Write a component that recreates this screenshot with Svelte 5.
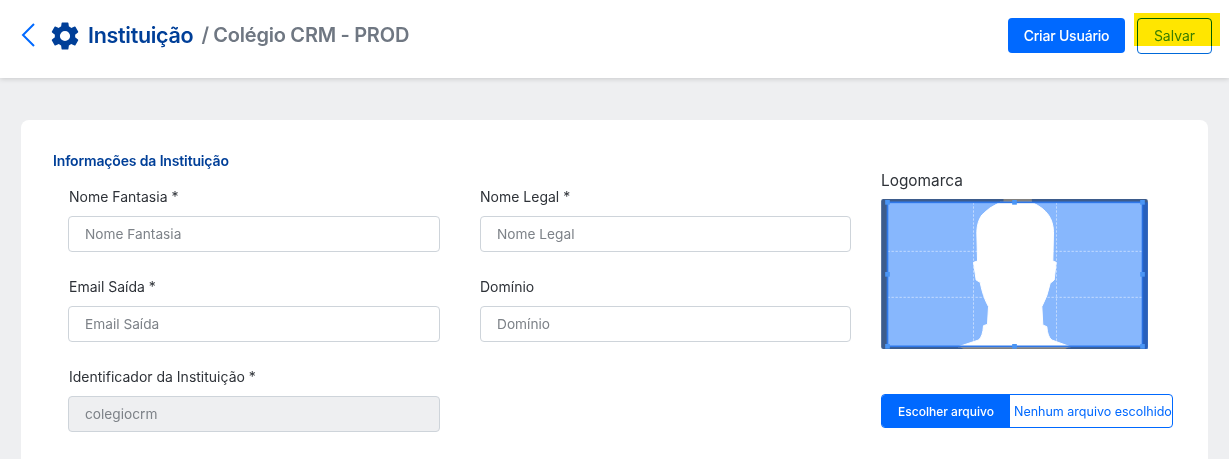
<script>
  const fields = [
    { label: 'Nome Fantasia *', placeholder: 'Nome Fantasia' },
    { label: 'Nome Legal *', placeholder: 'Nome Legal' },
    { label: 'Email Saída *', placeholder: 'Email Saída' },
    { label: 'Domínio', placeholder: 'Domínio' },
    { label: 'Identificador da Instituição *', value: 'colegiocrm', disabled: true }
  ]

  const head = 'M390 112 L485 112 Q520 128 535 150 Q549 170 550 200 L548 288 L558 292 L552 345 L540 355 Q532 395 515 425 L518 480 L530 485 Q532 515 545 525 L600 545 L265 545 L325 525 Q338 515 340 482 L352 478 L355 425 Q338 395 330 352 L318 345 L310 292 L322 288 L320 200 Q321 170 335 150 Q355 128 390 112 Z'
  const handles = [[52, 112], [433, 112], [817, 112], [52, 328], [817, 328], [52, 544], [433, 544], [817, 544]]
</script>

<div class="page">
  <header class="topbar">
    <div class="title">
      <svg class="back" viewBox="0 0 16 26" aria-hidden="true">
        <path d="M14 2 L3 13 L14 24" fill="none" stroke="#0069ff" stroke-width="2" />
      </svg>
      <svg class="gear" viewBox="0 0 24 24" aria-hidden="true">
        <path fill="#003f98" d="M19.14 12.94c.04-.3.06-.61.06-.94s-.02-.64-.07-.94l2.03-1.58a.49.49 0 0 0 .12-.61l-1.92-3.32a.49.49 0 0 0-.59-.22l-2.39.96a7 7 0 0 0-1.62-.94l-.36-2.54a.48.48 0 0 0-.48-.41h-3.84a.48.48 0 0 0-.47.41l-.36 2.54a7.2 7.2 0 0 0-1.62.94l-2.39-.96a.48.48 0 0 0-.59.22L2.74 8.87a.48.48 0 0 0 .12.61l2.03 1.58c-.05.3-.09.63-.09.94s.02.64.07.94l-2.03 1.58a.49.49 0 0 0-.12.61l1.92 3.32c.12.22.37.29.59.22l2.39-.96c.5.38 1.03.7 1.62.94l.36 2.54c.05.24.24.41.48.41h3.84c.24 0 .44-.17.47-.41l.36-2.54a7 7 0 0 0 1.62-.94l2.39.96c.22.08.47 0 .59-.22l1.92-3.32a.48.48 0 0 0-.12-.61l-2.01-1.58zM12 15.6A3.6 3.6 0 1 1 12 8.4a3.6 3.6 0 0 1 0 7.2z" />
      </svg>
      <h1>Instituição</h1>
      <span class="crumb">/ Colégio CRM - PROD</span>
    </div>
    <div class="actions">
      <button class="btn primary">Criar Usuário</button>
      <div class="save-wrap">
        <button class="btn outline">Salvar</button>
        <span class="marker"></span>
      </div>
    </div>
  </header>

  <main class="card">
    <div class="form">
      <h2>Informações da Instituição</h2>
      <div class="fields">
        {#each fields as f}
          <div class="field">
            <label for={f.label}>{f.label}</label>
            <input id={f.label} placeholder={f.placeholder} value={f.value ?? ''} disabled={f.disabled} />
          </div>
        {/each}
      </div>
    </div>

    <aside class="logo">
      <div class="logo-label">Logomarca</div>
      <svg class="cropper" viewBox="33 102 800 450" aria-hidden="true">
        <rect x="33" y="102" width="800" height="450" rx="6" fill="#3d5c8c" />
        <path d="M400 102 L485 102 L485 114 L400 114 Z M265 544 L600 544 L585 552 L280 552 Z" fill="#808080" />
        <rect x="52" y="112" width="765" height="432" fill="#87b7fd" />
        <path d={head} fill="#fff" stroke="#fff" stroke-width="3" stroke-linejoin="round" />
        <g stroke="#fff" stroke-width="2" stroke-dasharray="7 5" opacity="0.75">
          <path d="M310 112 V530 M559 112 V530 M52 259 H817 M52 397 H817" />
        </g>
        <rect x="52" y="112" width="765" height="432" fill="none" stroke="#2f78ea" stroke-width="5" />
        <rect x="817" y="112" width="16" height="440" fill="#1f63d0" opacity="0.7" />
        {#each handles as [x, y]}
          <rect x={x - 7} y={y - 7} width="14" height="14" fill="#4a95f5" />
        {/each}
      </svg>
      <div class="file">
        <span class="file-btn">Escolher arquivo</span>
        <span class="file-name">Nenhum arquivo escolhido</span>
      </div>
    </aside>
  </main>
</div>

<style>
  :global(body) {
    margin: 0;
    background: #eeeff1;
    font-family: Inter, "Noto Sans", sans-serif;
    overflow: hidden;
  }

  .page {
    height: 459px;
    overflow: hidden;
  }

  .topbar {
    height: 78px;
    box-sizing: border-box;
    background: #fff;
    box-shadow: 0 1px 5px rgba(0, 0, 0, 0.16);
    display: flex;
    align-items: center;
    justify-content: space-between;
    padding: 0 17px 8px 20px;
  }

  .title {
    display: flex;
    align-items: center;
  }

  .back {
    width: 16px;
    height: 26px;
    margin-right: 12px;
  }

  .gear {
    width: 34px;
    height: 34px;
    margin: 2px 6px 0 0;
  }

  h1 {
    margin: 0 8px 0 0;
    font-size: 21.5px;
    font-weight: 600;
    color: #003f98;
    letter-spacing: -0.3px;
  }

  .crumb {
    font-size: 20px;
    font-weight: 600;
    color: #6f7782;
    letter-spacing: -0.2px;
    word-spacing: -0.3px;
  }

  .actions {
    display: flex;
    align-items: center;
    gap: 12px;
  }

  .btn {
    font: 500 14px Inter, sans-serif;
    border-radius: 4px;
    height: 35px;
    box-sizing: border-box;
  }

  .primary {
    width: 117px;
    background: #0069ff;
    border: none;
    color: #fff;
    letter-spacing: -0.2px;
  }

  .save-wrap {
    position: relative;
    display: flex;
    margin-top: 1px;
  }

  .outline {
    width: 75px;
    height: 36px;
    background: #fff;
    border: 1px solid #0069d9;
    color: #3a8cff;
    font-weight: 400;
  }

  .marker {
    position: absolute;
    left: -3px;
    top: -5px;
    width: 86px;
    height: 33px;
    background: #ffe600;
    mix-blend-mode: multiply;
  }

  .card {
    margin: 42px 21px 0;
    background: #fff;
    border-radius: 8px;
    height: 400px;
    box-sizing: border-box;
    padding: 32px 0 0 32px;
    display: flex;
  }

  .form {
    width: 828px;
  }

  h2 {
    margin: 0;
    font-size: 14px;
    line-height: 18px;
    font-weight: 600;
    color: #003f98;
    letter-spacing: -0.15px;
  }

  .fields {
    display: grid;
    grid-template-columns: 372px 371px;
    column-gap: 40px;
    row-gap: 26px;
    margin: 18px 0 0 15px;
  }

  .field {
    display: flex;
    flex-direction: column;
    gap: 10px;
  }

  .field:nth-child(odd) label {
    padding-left: 1px;
  }

  label {
    font-size: 14px;
    line-height: 18px;
    color: #2e3238;
  }

  input {
    height: 36px;
    box-sizing: border-box;
    border: 1px solid #ced4da;
    border-radius: 4px;
    padding: 0 16px;
    font: 400 13.7px Inter, sans-serif;
    color: #7d8288;
    background: #fff;
    outline: none;
  }

  input::placeholder {
    color: #7d8288;
    opacity: 1;
  }

  input:disabled {
    background: #eeeff1;
  }

  .logo {
    display: flex;
    flex-direction: column;
    margin-top: 19px;
  }

  .logo-label {
    font-size: 15.4px;
    line-height: 20px;
    color: #2e3238;
    margin-bottom: 8px;
  }

  .cropper {
    display: block;
    width: 267px;
    height: 150px;
  }

  .file {
    margin-top: 45px;
    width: 292px;
    height: 34px;
    box-sizing: border-box;
    border: 1px solid #0069ff;
    border-radius: 4px;
    display: flex;
    align-items: center;
    overflow: hidden;
    font-size: 12px;
  }

  .file-btn {
    background: #0069ff;
    color: #fff;
    width: 128px;
    height: 100%;
    display: flex;
    align-items: center;
    justify-content: center;
    font-weight: 500;
  }

  .file-name {
    color: #0069ff;
    padding-left: 4px;
    white-space: nowrap;
    font-size: 12.5px;
  }
</style>
